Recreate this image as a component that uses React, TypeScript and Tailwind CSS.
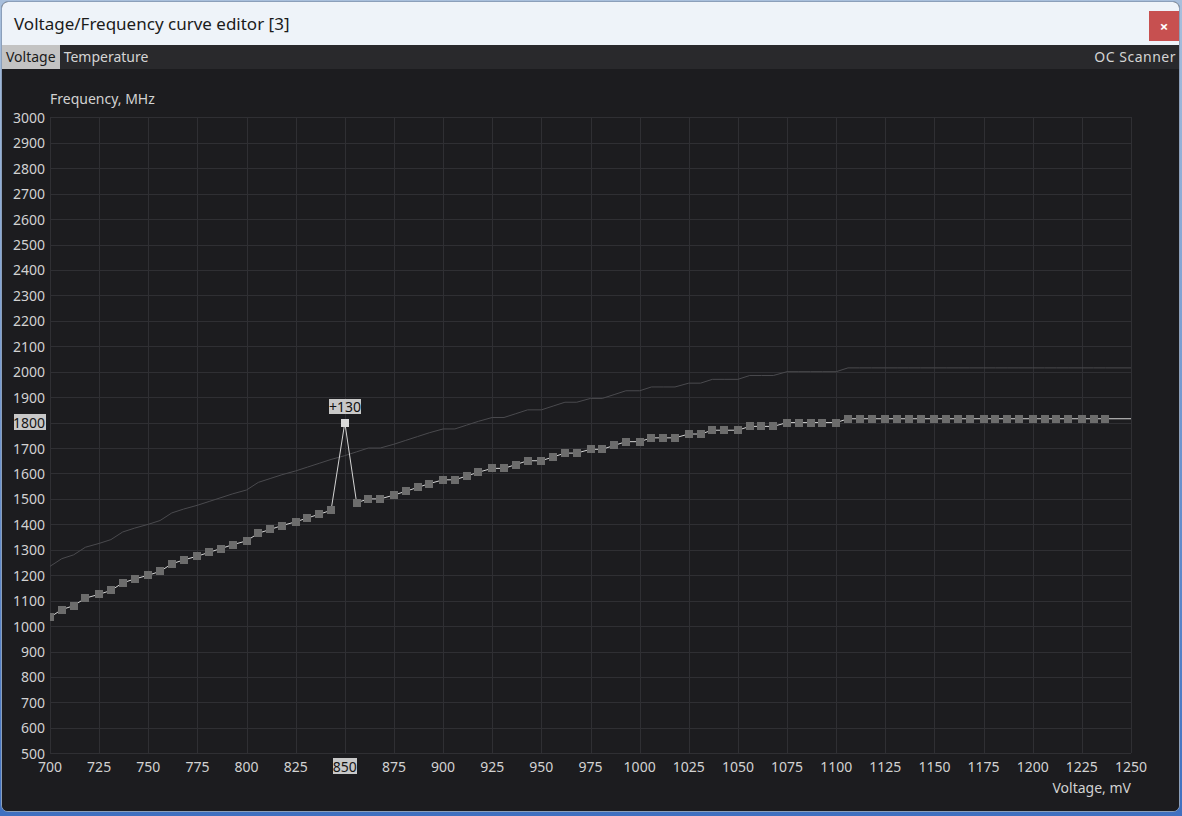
import React from 'react';

// plot geometry, in page pixels
const X0 = 50;
const X1 = 1131;
const Y_TOP = 117.3;
const Y_BOTTOM = 753.3;
const PX_PER_MV = (X1 - X0) / 550;
const PX_PER_MHZ = (Y_BOTTOM - Y_TOP) / 2500;

const xOf = (mv: number) => X0 + (mv - 700) * PX_PER_MV;
const yOf = (mhz: number) => Y_TOP + (3000 - mhz) * PX_PER_MHZ;

// base curve, one value per point (700, 706, 712, 718, 725, ...)
const base = [
  1035, 1065, 1080, 1110, 1125, 1140, 1170, 1185,
  1200, 1215, 1245, 1260, 1275, 1290, 1305, 1320,
  1335, 1365, 1380, 1395, 1410, 1425, 1440, 1455,
  1470, 1485, 1500, 1500, 1515, 1530, 1545, 1560,
  1575, 1575, 1590, 1605, 1620, 1620, 1635, 1650,
  1650, 1665, 1680, 1680, 1695, 1695, 1710, 1725,
  1725, 1740, 1740, 1740, 1755, 1755, 1770, 1770,
  1770, 1785, 1785, 1785, 1800, 1800, 1800, 1800,
  1800,
  ...Array(22).fill(1815),
];

const points = base.map((f, i) => ({
  mv: 700 + 25 * Math.floor(i / 4) + 6 * (i % 4),
  freq: f,
}));

const SELECTED_MV = 850;
const SELECTED_OFFSET = 130;
const DEFAULT_DELTA = 200;

const edited = points.map((p) =>
  p.mv === SELECTED_MV ? { ...p, freq: p.freq + DEFAULT_DELTA + SELECTED_OFFSET } : p
);

const yTicks = Array.from({ length: 26 }, (_, i) => 500 + i * 100);
const xTicks = Array.from({ length: 23 }, (_, i) => 700 + i * 25);

function CurveChart() {
  const last = edited[edited.length - 1];
  const editedLine =
    edited.map((p) => `${xOf(p.mv)},${yOf(p.freq)}`).join(' ') + ` ${X1},${yOf(last.freq)}`;
  const defaultLine =
    points.map((p) => `${xOf(p.mv)},${yOf(p.freq + DEFAULT_DELTA)}`).join(' ') +
    ` ${X1},${yOf(last.freq + DEFAULT_DELTA)}`;

  const selX = xOf(SELECTED_MV);
  const selY = yOf(1800);

  return (
    <svg
      width={1177}
      height={742}
      viewBox="2 69 1177 742"
      className="block font-['Noto_Sans',Arial,sans-serif] text-[14px]"
    >
      <defs>
        <clipPath id="plot">
          <rect x={X0} y={100} width={X1 - X0 + 10} height={660} />
        </clipPath>
      </defs>

      {/* grid */}
      <g stroke="#2f2f33" strokeWidth={1} shapeRendering="crispEdges">
        {yTicks.map((t) => (
          <line key={t} x1={X0} x2={X1} y1={Math.round(yOf(t)) + 0.5} y2={Math.round(yOf(t)) + 0.5} />
        ))}
        {xTicks.map((t) => (
          <line key={t} x1={Math.round(xOf(t)) + 0.5} x2={Math.round(xOf(t)) + 0.5} y1={Y_TOP} y2={Y_BOTTOM} />
        ))}
      </g>

      {/* y labels */}
      {yTicks.map((t) =>
        t === 1800 ? (
          <g key={t}>
            <rect x={14} y={414} width={32} height={16} fill="#c8c8c8" />
            <text x={45} y={yOf(t)} textAnchor="end" dominantBaseline="central" fill="#151515">
              {t}
            </text>
          </g>
        ) : (
          <text key={t} x={45} y={yOf(t)} textAnchor="end" dominantBaseline="central" fill="#d2d2d2">
            {t}
          </text>
        )
      )}

      {/* x labels */}
      {xTicks.map((t) =>
        t === SELECTED_MV ? (
          <g key={t}>
            <rect x={333} y={758} width={24} height={16} fill="#c8c8c8" />
            <text x={xOf(t)} y={766} textAnchor="middle" dominantBaseline="central" fill="#151515">
              {t}
            </text>
          </g>
        ) : (
          <text key={t} x={xOf(t)} y={766} textAnchor="middle" dominantBaseline="central" fill="#d2d2d2">
            {t}
          </text>
        )
      )}

      <text x={50} y={98} dominantBaseline="central" fill="#d2d2d2">
        Frequency, MHz
      </text>
      <text x={X1} y={787} textAnchor="end" dominantBaseline="central" fill="#d2d2d2">
        Voltage, mV
      </text>

      <g clipPath="url(#plot)">
        {/* default curve */}
        <polyline points={defaultLine} fill="none" stroke="#4a4a4e" strokeWidth={1} />
        {/* edited curve */}
        <polyline points={editedLine} fill="none" stroke="#d4d4d4" strokeWidth={1} />
        {edited.map((p) =>
          p.mv === SELECTED_MV ? null : (
            <rect
              key={p.mv}
              x={Math.round(xOf(p.mv)) - 4}
              y={Math.round(yOf(p.freq)) - 4}
              width={8}
              height={8}
              fill="#6c6c6c"
              shapeRendering="crispEdges"
            />
          )
        )}
      </g>

      {/* selected point */}
      <rect x={Math.round(selX) - 4} y={Math.round(selY) - 4} width={8} height={8} fill="#d9d9d9" shapeRendering="crispEdges" />
      <rect x={329} y={399} width={32} height={15} fill="#c8c8c8" />
      <text x={345} y={406.5} textAnchor="middle" dominantBaseline="central" fill="#111111">
        +{SELECTED_OFFSET}
      </text>
    </svg>
  );
}

export default function App() {
  return (
    <div className="w-[1182px] h-[816px] bg-gradient-to-b from-[#a8bfdc] to-[#3f70c0] pl-[1px] pt-[1px]">
      <div className="w-[1179px] h-[811px] flex flex-col rounded-[7px] overflow-hidden border border-[#8b9fba] bg-[#1c1c1f] font-['Noto_Sans',Arial,sans-serif]">
        {/* title bar */}
        <div className="h-[43px] shrink-0 bg-[#eef3f9] flex items-start justify-between">
          <span className="pl-[12px] pt-[10px] text-[17px] leading-[24px] text-[#1b1b1b]">
            Voltage/Frequency curve editor [3]
          </span>
          <button className="mt-[9px] w-[30px] h-[30px] bg-[#c75050] text-white text-[15px] font-bold leading-none flex items-center justify-center">
            ×
          </button>
        </div>

        {/* tabs */}
        <div className="h-[24px] shrink-0 bg-[#29292c] flex items-center text-[14px] leading-[20px]">
          <span className="h-full px-[4px] flex items-center bg-[#c3c3c3] text-[#1a1a1a]">Voltage</span>
          <span className="h-full px-[4px] flex items-center text-[#d4d4d4]">Temperature</span>
          <span className="ml-auto pr-[3px] tracking-[0.5px] text-[#d4d4d4]">OC Scanner</span>
        </div>

        {/* chart */}
        <div className="flex-1 bg-[#1c1c1f]">
          <CurveChart />
        </div>
      </div>
    </div>
  );
}
